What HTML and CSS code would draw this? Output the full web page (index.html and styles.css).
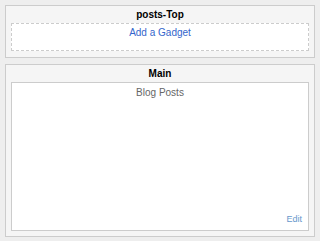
FILE: index.html
```html
<!DOCTYPE html>
<html lang="en">
<head>
    <meta charset="UTF-8">
    <title>Layout</title>
    <link rel="stylesheet" href="styles.css">
</head>
<body>

    <!-- posts-Top section -->
    <div class="section">
        <div class="section-title">posts-Top</div>
        <div class="add-gadget"><a href="#">Add a Gadget</a></div>
    </div>

    <!-- Main section -->
    <div class="section">
        <div class="section-title">Main</div>
        <div class="widget">
            <div class="widget-name">Blog Posts</div>
            <a class="widget-edit" href="#">Edit</a>
        </div>
    </div>

</body>
</html>
```

FILE: styles.css
```css
body {
    margin: 5px;
    background-color: #eeeeee;
    font-family: "Liberation Sans", Arial, sans-serif;
    font-size: 10px;
}
.section {
    border: 1px solid #cccccc;
    background-color: #f5f5f5;
    padding: 0 5px 5px;
    margin-bottom: 6px;
}
.section-title {
    height: 17px;
    box-sizing: border-box;
    padding-top: 1px;
    line-height: 16px;
    text-align: center;
    font-weight: bold;
    color: #000;
}
.add-gadget {
    height: 28px;
    box-sizing: border-box;
    border: 1px dashed #cccccc;
    background-color: #fff;
    text-align: center;
    line-height: 14px;
    padding-top: 2px;
    margin-bottom: 1px;
}
.add-gadget a {
    color: #3366cc;
    text-decoration: none;
}
.widget {
    height: 149px;
    box-sizing: border-box;
    border: 1px solid #cccccc;
    background-color: #fff;
    display: flex;
    flex-direction: column;
    padding: 3px 6px 6px;
}
.widget-name {
    text-align: center;
    line-height: 14px;
    color: #666666;
}
.widget-edit {
    margin-top: auto;
    align-self: flex-end;
    font-size: 9px;
    color: #6699cc;
    text-decoration: none;
}
```
